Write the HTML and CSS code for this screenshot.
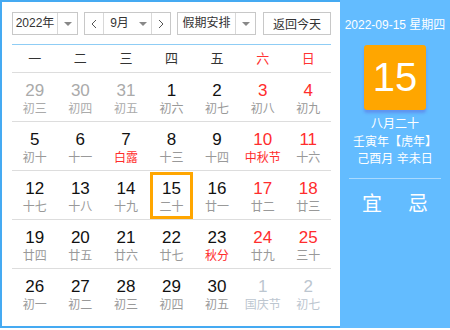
FILE: index.html
```html
<!DOCTYPE html>
<html lang="zh-CN">
<head>
    <meta charset="UTF-8">
    <meta name="viewport" content="width=device-width, initial-scale=1.0">
    <title>万年历</title>
    <link rel="stylesheet" href="styles.css">
</head>
<body>
    <div class="calendar">
        <div class="main">
            <div class="toolbar">
                <div class="select year">
                    <span class="select-text">2022年</span>
                    <span class="select-arrow"><i class="caret"></i></span>
                </div>
                <div class="select month">
                    <span class="step">
                        <svg width="6" height="10" viewBox="0 0 6 10"><polyline points="5,1 1,5 5,9" fill="none" stroke="#555" stroke-width="1"/></svg>
                    </span>
                    <span class="select-text">9月</span>
                    <span class="select-arrow plain"><i class="caret"></i></span>
                    <span class="step right">
                        <svg width="6" height="10" viewBox="0 0 6 10"><polyline points="1,1 5,5 1,9" fill="none" stroke="#555" stroke-width="1"/></svg>
                    </span>
                </div>
                <div class="select holiday">
                    <span class="select-text">假期安排</span>
                    <span class="select-arrow"><i class="caret"></i></span>
                </div>
                <button class="today-btn">返回今天</button>
            </div>

            <div class="weekdays">
                <span>一</span>
                <span>二</span>
                <span>三</span>
                <span>四</span>
                <span>五</span>
                <span class="red">六</span>
                <span class="red">日</span>
            </div>

            <div class="weeks">
                <div class="week">
                    <div class="day other"><b>29</b><small>初三</small></div>
                    <div class="day other"><b>30</b><small>初四</small></div>
                    <div class="day other"><b>31</b><small>初五</small></div>
                    <div class="day"><b>1</b><small>初六</small></div>
                    <div class="day"><b>2</b><small>初七</small></div>
                    <div class="day weekend"><b>3</b><small>初八</small></div>
                    <div class="day weekend"><b>4</b><small>初九</small></div>
                </div>
                <div class="week">
                    <div class="day"><b>5</b><small>初十</small></div>
                    <div class="day"><b>6</b><small>十一</small></div>
                    <div class="day"><b>7</b><small class="term">白露</small></div>
                    <div class="day"><b>8</b><small>十三</small></div>
                    <div class="day"><b>9</b><small>十四</small></div>
                    <div class="day weekend"><b>10</b><small class="term">中秋节</small></div>
                    <div class="day weekend"><b>11</b><small>十六</small></div>
                </div>
                <div class="week">
                    <div class="day"><b>12</b><small>十七</small></div>
                    <div class="day"><b>13</b><small>十八</small></div>
                    <div class="day"><b>14</b><small>十九</small></div>
                    <div class="day today"><b>15</b><small>二十</small></div>
                    <div class="day"><b>16</b><small>廿一</small></div>
                    <div class="day weekend"><b>17</b><small>廿二</small></div>
                    <div class="day weekend"><b>18</b><small>廿三</small></div>
                </div>
                <div class="week">
                    <div class="day"><b>19</b><small>廿四</small></div>
                    <div class="day"><b>20</b><small>廿五</small></div>
                    <div class="day"><b>21</b><small>廿六</small></div>
                    <div class="day"><b>22</b><small>廿七</small></div>
                    <div class="day"><b>23</b><small class="term">秋分</small></div>
                    <div class="day weekend"><b>24</b><small>廿九</small></div>
                    <div class="day weekend"><b>25</b><small>三十</small></div>
                </div>
                <div class="week">
                    <div class="day"><b>26</b><small>初一</small></div>
                    <div class="day"><b>27</b><small>初二</small></div>
                    <div class="day"><b>28</b><small>初三</small></div>
                    <div class="day"><b>29</b><small>初四</small></div>
                    <div class="day"><b>30</b><small>初五</small></div>
                    <div class="day next"><b>1</b><small>国庆节</small></div>
                    <div class="day next"><b>2</b><small>初七</small></div>
                </div>
            </div>
        </div>

        <div class="panel">
            <p class="panel-date">2022-09-15 星期四</p>
            <div class="big-day">15</div>
            <p class="lunar">八月二十</p>
            <p class="lunar">壬寅年【虎年】</p>
            <p class="lunar">己酉月 辛未日</p>
            <div class="panel-line"></div>
            <div class="yiji">
                <span>宜</span>
                <span>忌</span>
            </div>
        </div>
    </div>
</body>
</html>
```

FILE: styles.css
```css
* {
    box-sizing: border-box;
    margin: 0;
    padding: 0;
}

body {
    font-family: 'Liberation Sans', 'Noto Sans CJK SC', sans-serif;
    background-color: #ffffff;
    color: #333;
}

.calendar {
    display: flex;
    width: 450px;
    height: 328px;
}

.main {
    width: 340px;
    border: 2px solid #45aaf2;
    border-right: none;
    padding: 10px 9px 0 10px;
}

/* Toolbar */
.toolbar {
    display: flex;
    height: 23px;
    gap: 6px;
}

.select {
    display: flex;
    border: 1px solid #c8c8c8;
    background-color: #fff;
    font-size: 12px;
    line-height: 21px;
}

.select.year {
    width: 66px;
}

.select.month {
    width: 87px;
}

.select.holiday {
    width: 79px;
}

.select-text {
    flex: 1;
    text-align: center;
}

.select-arrow {
    width: 20px;
    border-left: 1px solid #d8d8d8;
    display: flex;
    align-items: center;
    justify-content: center;
}

.select-arrow.plain {
    border-left: none;
    width: 16px;
}

.caret {
    width: 0;
    height: 0;
    border-left: 4px solid transparent;
    border-right: 4px solid transparent;
    border-top: 4px solid #888;
}

.step {
    width: 19px;
    border-right: 1px solid #d8d8d8;
    display: flex;
    align-items: center;
    justify-content: center;
}

.step.right {
    border-right: none;
    border-left: 1px solid #d8d8d8;
}

.today-btn {
    width: 68px;
    margin-left: 1px;
    border: 1px solid #c8c8c8;
    background-color: #fff;
    font-family: inherit;
    font-size: 12px;
    color: #333;
}

/* Weekday header */
.weekdays {
    display: grid;
    grid-template-columns: repeat(7, 1fr);
    margin-top: 9px;
    height: 29px;
    border-top: 1px solid #8fcdf5;
    border-bottom: 1px solid #ddd;
    font-size: 13px;
    line-height: 27px;
    text-align: center;
    color: #333;
}

.weekdays .red {
    color: #ff3333;
}

/* Day grid */
.week {
    display: grid;
    grid-template-columns: repeat(7, 1fr);
    height: 49px;
    border-bottom: 1px solid #ddd;
}

.week:last-child {
    border-bottom: none;
}

.day {
    padding-top: 8px;
    text-align: center;
}

.day b {
    display: block;
    font-weight: normal;
    font-size: 17px;
    line-height: 20px;
    color: #111;
}

.day small {
    display: block;
    font-size: 12px;
    line-height: 16px;
    color: #999;
}

.day.weekend b {
    color: #ff2d2d;
}

.day small.term {
    color: #ff2d2d;
}

.day.other b {
    color: #aaa;
}

.day.other small {
    color: #aaa;
}

.day.next b,
.day.next small {
    color: #bcc6d0;
}

.day.today {
    margin: 1px 1px 0;
    padding-top: 4px;
    border: 3px solid #ffa600;
}

/* Right panel */
.panel {
    flex: 1;
    background-color: #63bcff;
    color: #fff;
    text-align: center;
}

.panel-date {
    font-size: 12px;
    margin-top: 17px;
    line-height: 16px;
}

.big-day {
    width: 62px;
    height: 65px;
    margin: 12px auto 6px;
    background-color: #ffa600;
    border-radius: 3px;
    box-shadow: 0 3px 3px rgba(90, 100, 220, 0.45);
    font-size: 40px;
    line-height: 65px;
}

.lunar {
    font-size: 12px;
    line-height: 17.5px;
}

.panel-line {
    width: 92px;
    height: 1px;
    margin: 9px auto 0;
    background-color: rgba(255, 255, 255, 0.45);
}

.yiji {
    display: flex;
    justify-content: center;
    gap: 26px;
    margin-top: 12px;
    font-size: 20px;
    line-height: 26px;
}
```
